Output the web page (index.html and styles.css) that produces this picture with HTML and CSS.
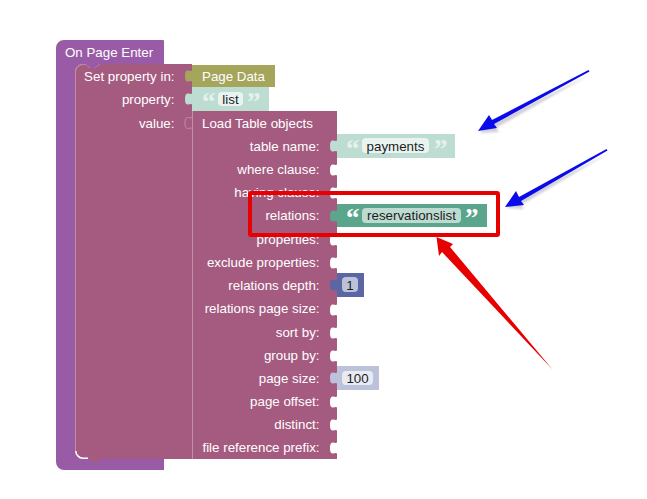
FILE: index.html
```html
<!DOCTYPE html>
<html lang="en">
<head>
<meta charset="utf-8">
<title>On Page Enter</title>
<link rel="stylesheet" href="styles.css">
</head>
<body>
<svg class="canvas" width="647" height="499" viewBox="0 0 647 499" xmlns="http://www.w3.org/2000/svg">
  <defs>
    <path id="tab" d="M0.500,-8 c0,5 -3,2 -5,2.500 c-2,0.500 -2.500,2 -2.500,5.500 s0.500,5 2.500,5.500 c2,0.500 5,-2.500 5,2.500 z"/>
    <filter id="soft" x="-10%" y="-20%" width="120%" height="140%">
      <feGaussianBlur stdDeviation="1.2"/>
    </filter>
  </defs>

  <!-- On Page Enter statement block -->
  <path class="b-purple" d="M56,48 a8,8 0 0 1 8,-8 H163 a1,1 0 0 1 1,1 V64 H100 L95,68 H90 L85,64 H83 a8,8 0 0 0 -8,8 V451 a8,8 0 0 0 8,8 H164 V470 H64 a8,8 0 0 1 -8,-8 Z"/>
  <text class="t-label" x="65" y="57">On Page Enter</text>

  <!-- Set property block -->
  <path class="b-maroon" d="M75,72 a8,8 0 0 1 8,-8 H85 L90,68 H95 L100,64 H192 V459 H102 L97,462.500 H93 L88,459 H83 a8,8 0 0 1 -8,-8 Z"/>
  <path class="line-white" d="M75.800,451 a7.500,7.500 0 0 0 7.500,7.200 H88"/>
  <path class="line-soft" d="M75.500,451 V72 a8,8 0 0 1 8,-7.500 H85"/>
  <text class="t-label t-end" x="174.500" y="81">Set property in:</text>
  <text class="t-label t-end" x="174.500" y="104">property:</text>
  <text class="t-label t-end" x="174.500" y="128">value:</text>

  <!-- Page Data -->
  <use href="#tab" class="b-olive" x="192" y="76"/>
  <rect class="b-olive" x="192" y="65" width="83" height="22"/>
  <text class="t-label" x="202" y="81">Page Data</text>

  <!-- list -->
  <use href="#tab" class="b-mint" x="192" y="99"/>
  <rect class="b-mint" x="192" y="87" width="77" height="24"/>
  <text class="t-quote" x="202" y="111">“</text>
  <rect class="f-mint" x="218" y="92" width="25" height="14" rx="4"/>
  <text class="t-field t-mid" x="230.500" y="104">list</text>
  <text class="t-quote" x="247" y="111">”</text>

  <!-- Load Table objects -->
  <path class="b-maroon" d="M192,111 H337 V459 H192 Z"/>
  <use href="#tab" class="b-maroon tab-outline" x="192" y="123"/>
  <path class="line-soft" d="M192.500,111 V459"/>
  <text class="t-label" x="202" y="128">Load Table objects</text>
  <g>
    <text class="t-label t-end" x="319.500" y="151">table name:</text>
    <text class="t-label t-end" x="319.500" y="174">where clause:</text>
    <text class="t-label t-end" x="319.500" y="197">having clause:</text>
    <text class="t-label t-end" x="319.500" y="220">relations:</text>
    <text class="t-label t-end" x="319.500" y="244">properties:</text>
    <text class="t-label t-end" x="319.500" y="267">exclude properties:</text>
    <text class="t-label t-end" x="319.500" y="290">relations depth:</text>
    <text class="t-label t-end" x="319.500" y="313">relations page size:</text>
    <text class="t-label t-end" x="319.500" y="337">sort by:</text>
    <text class="t-label t-end" x="319.500" y="360">group by:</text>
    <text class="t-label t-end" x="319.500" y="383">page size:</text>
    <text class="t-label t-end" x="319.500" y="406">page offset:</text>
    <text class="t-label t-end" x="319.500" y="429">distinct:</text>
    <text class="t-label t-end" x="319.500" y="452">file reference prefix:</text>
  </g>
  <g class="slots">
    <use href="#tab" x="337" y="170"/>
    <use href="#tab" x="337" y="193"/>
    <use href="#tab" x="337" y="240"/>
    <use href="#tab" x="337" y="263"/>
    <use href="#tab" x="337" y="310"/>
    <use href="#tab" x="337" y="333"/>
    <use href="#tab" x="337" y="356"/>
    <use href="#tab" x="337" y="402"/>
    <use href="#tab" x="337" y="425"/>
    <use href="#tab" x="337" y="448"/>
  </g>

  <!-- payments -->
  <use href="#tab" class="b-mint" x="337" y="146"/>
  <rect class="b-mint" x="337" y="134" width="118" height="24"/>
  <text class="t-quote" x="346" y="158">“</text>
  <rect class="f-mint" x="362" y="138" width="67" height="15" rx="4"/>
  <text class="t-field t-mid" x="395.500" y="151">payments</text>
  <text class="t-quote" x="434" y="158">”</text>

  <!-- relations -->
  <use href="#tab" class="b-green" x="337" y="216"/>
  <rect class="b-green" x="337" y="204" width="150" height="23"/>
  <text class="t-quote t-bright" x="346" y="227">“</text>
  <rect class="f-green" x="362" y="208" width="99" height="15" rx="4"/>
  <text class="t-field t-mid" x="411.500" y="220">reservationslist</text>
  <text class="t-quote t-bright" x="465" y="227">”</text>

  <!-- 1 -->
  <use href="#tab" class="b-blue" x="337" y="285"/>
  <rect class="b-blue" x="337" y="273" width="27" height="24"/>
  <rect class="f-blue" x="342" y="277" width="16" height="15" rx="4"/>
  <text class="t-field t-mid" x="350" y="290">1</text>

  <!-- 100 -->
  <use href="#tab" class="b-periwinkle" x="337" y="378"/>
  <rect class="b-periwinkle" x="337" y="366" width="42" height="24"/>
  <rect class="f-periwinkle" x="342" y="371" width="31" height="14" rx="4"/>
  <text class="t-field t-mid" x="357.500" y="383">100</text>

  <!-- Annotations -->
  <path class="a-shadow" d="M591,74 L496,128 L499,132 L480,133 L491,118 L494,122 Z"/>
  <path class="a-blue" d="M589.500,71.500 L494,124 L497,128 L478,131 L489,115 L492,120 L588.500,70 Z"/>
  <path class="a-shadow" d="M609,153 L521,205 L524,209 L507,208 L517,195 L519,199 Z"/>
  <path class="a-blue" d="M607.500,150.500 L521,201 L524,205 L505,207 L516,191 L519,197 L606.500,149 Z"/>
  <rect class="a-rect" x="250" y="193" width="248" height="42" rx="1"/>
  <path class="a-red" d="M436.500,237 L453,244 L450,247 L552.500,369.500 L442,252 L439,256 Z"/>
</svg>
</body>
</html>
```
FILE: styles.css
```css
html, body {
  margin: 0;
  padding: 0;
  background: #ffffff;
}
.canvas {
  display: block;
}
text {
  font-family: "Liberation Sans", Arial, sans-serif;
  font-size: 13.33px;
}
.t-label { fill: #ffffff; }
.t-end { text-anchor: end; }
.t-mid { text-anchor: middle; }
.t-field { fill: #1d1d1d; }
.t-quote {
  font-family: "Liberation Serif", "Times New Roman", serif;
  font-size: 27px;
  font-weight: 700;
  fill: #e6f1ed;
}
.t-bright { fill: #ffffff; }
.b-purple { fill: #995ba5; }
.b-maroon { fill: #a55b80; }
.b-olive { fill: #a5a55b; }
.b-mint { fill: #bdddd3; }
.b-green { fill: #5ba58c; }
.b-blue { fill: #5b67a5; }
.b-periwinkle { fill: #bdc2db; }
.f-mint { fill: #e9f4f0; }
.f-green { fill: #bedbd1; }
.f-blue { fill: #bdc2db; }
.f-periwinkle { fill: #e9ebf4; }
.slots { fill: #ffffff; }
.tab-outline { stroke: #c08fa8; stroke-width: 1; }
.line-white { fill: none; stroke: #ffffff; stroke-width: 1.5; }
.line-soft { fill: none; stroke: #c08fa8; stroke-width: 1; }
.a-blue { fill: #0a0aec; }
.a-red { fill: #e60000; }
.a-rect { fill: none; stroke: #e60000; stroke-width: 4; }
.a-shadow { fill: #8a8a9a; opacity: 0.4; filter: url(#soft); }
```
